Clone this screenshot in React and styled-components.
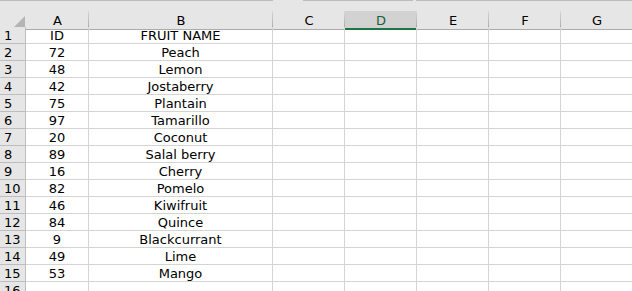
import React from 'react';
import styled, { createGlobalStyle } from 'styled-components';

const GlobalStyle = createGlobalStyle`
    html, body {
        margin:0;
        padding:0;
        background:#ffffff;
    }
    body {
        font-family: "DejaVu Sans", Verdana, sans-serif;
        font-size:13px;
        color:#000000;
    }
`;

const COLS = '26px 63px 184px 72px 72px 72px 72px 72px';

const Sheet = styled.div`
    width:632px;
    height:291px;
    overflow:hidden;
    background:#ffffff;
`;

const TopEdge = styled.div`
    display:flex;
    height:10px;
    background:#e6e6e6;
`;

const EdgeLine = styled.div`
    height:1px;
    width:${props => props.w}px;
    flex:${props => props.grow ? 1 : 'none'};
    background:${props => props.gap ? '#e6e6e6' : '#bcbcbc'};
`;

const HeaderRow = styled.div`
    display:grid;
    grid-template-columns:${COLS};
    height:17px;
    background:#e6e6e6;
`;

const Corner = styled.div`
    display:flex;
    align-items:flex-end;
    justify-content:flex-end;
    padding:0 1px 2px 0;
    box-sizing:border-box;
    border-bottom:1px solid #ababab;
    background: linear-gradient(#e6e6e6, #e6e6e6) padding-box,
                linear-gradient(#d6d6d6, #a8a8a8) right 1px top 1px / 1px 100% no-repeat;
`;

const ColHead = styled.div`
    display:flex;
    align-items:center;
    justify-content:center;
    box-sizing:border-box;
    padding-top:${props => props.selected ? '3px' : '2px'};
    border-bottom:${props => props.selected ? '2px solid #217346' : '1px solid #ababab'};
    color:${props => props.selected ? '#1d5e3a' : '#000000'};
    background:
        linear-gradient(to bottom, #d8d8d8, #a4a4a4) right 0 top 1px / 1px 100% no-repeat,
        linear-gradient(${props => props.selected ? '#d2d2d2' : '#e6e6e6'}, ${props => props.selected ? '#d2d2d2' : '#e6e6e6'}) left 0 top 1px / 100% 100% no-repeat,
        #e6e6e6;
`;

const Row = styled.div`
    display:grid;
    grid-template-columns:${COLS};
    height:17px;
`;

const RowHead = styled.div`
    display:flex;
    align-items:center;
    padding:1px 0 0 4px;
    box-sizing:border-box;
    background:#e6e6e6;
    border-right:1px solid #bdbdbd;
    border-bottom:1px solid #bdbdbd;
`;

const Cell = styled.div`
    display:flex;
    align-items:center;
    justify-content:center;
    padding-top:1px;
    white-space:nowrap;
    box-sizing:border-box;
    border-right:1px solid #d4d4d4;
    border-bottom:1px solid #d4d4d4;
`;

const columns = ['A', 'B', 'C', 'D', 'E', 'F', 'G'];

const data = [
    ['ID', 'FRUIT NAME'],
    ['72', 'Peach'],
    ['48', 'Lemon'],
    ['42', 'Jostaberry'],
    ['75', 'Plantain'],
    ['97', 'Tamarillo'],
    ['20', 'Coconut'],
    ['89', 'Salal berry'],
    ['16', 'Cherry'],
    ['82', 'Pomelo'],
    ['46', 'Kiwifruit'],
    ['84', 'Quince'],
    ['9', 'Blackcurrant'],
    ['49', 'Lime'],
    ['53', 'Mango'],
    ['', ''],
];

const App = () => {
    return (
        <Sheet>
            <GlobalStyle />

            <TopEdge>
                <EdgeLine w={273} />
                <EdgeLine w={30} gap />
                <EdgeLine w={110} />
                <EdgeLine w={3} gap />
                <EdgeLine grow />
            </TopEdge>

            <HeaderRow>
                <Corner>
                    <svg width="11" height="11" viewBox="0 0 11 11">
                        <polygon points="11,0 11,11 0,11" fill="#b4b4b4" />
                    </svg>
                </Corner>
                {columns.map(c => (
                    <ColHead key={c} selected={c === 'D'}>{c}</ColHead>
                ))}
            </HeaderRow>

            {data.map((r, i) => (
                <Row key={i}>
                    <RowHead>{i + 1}</RowHead>
                    <Cell>{r[0]}</Cell>
                    <Cell>{r[1]}</Cell>
                    <Cell />
                    <Cell />
                    <Cell />
                    <Cell />
                    <Cell />
                </Row>
            ))}
        </Sheet>
    );
}

export default App;
